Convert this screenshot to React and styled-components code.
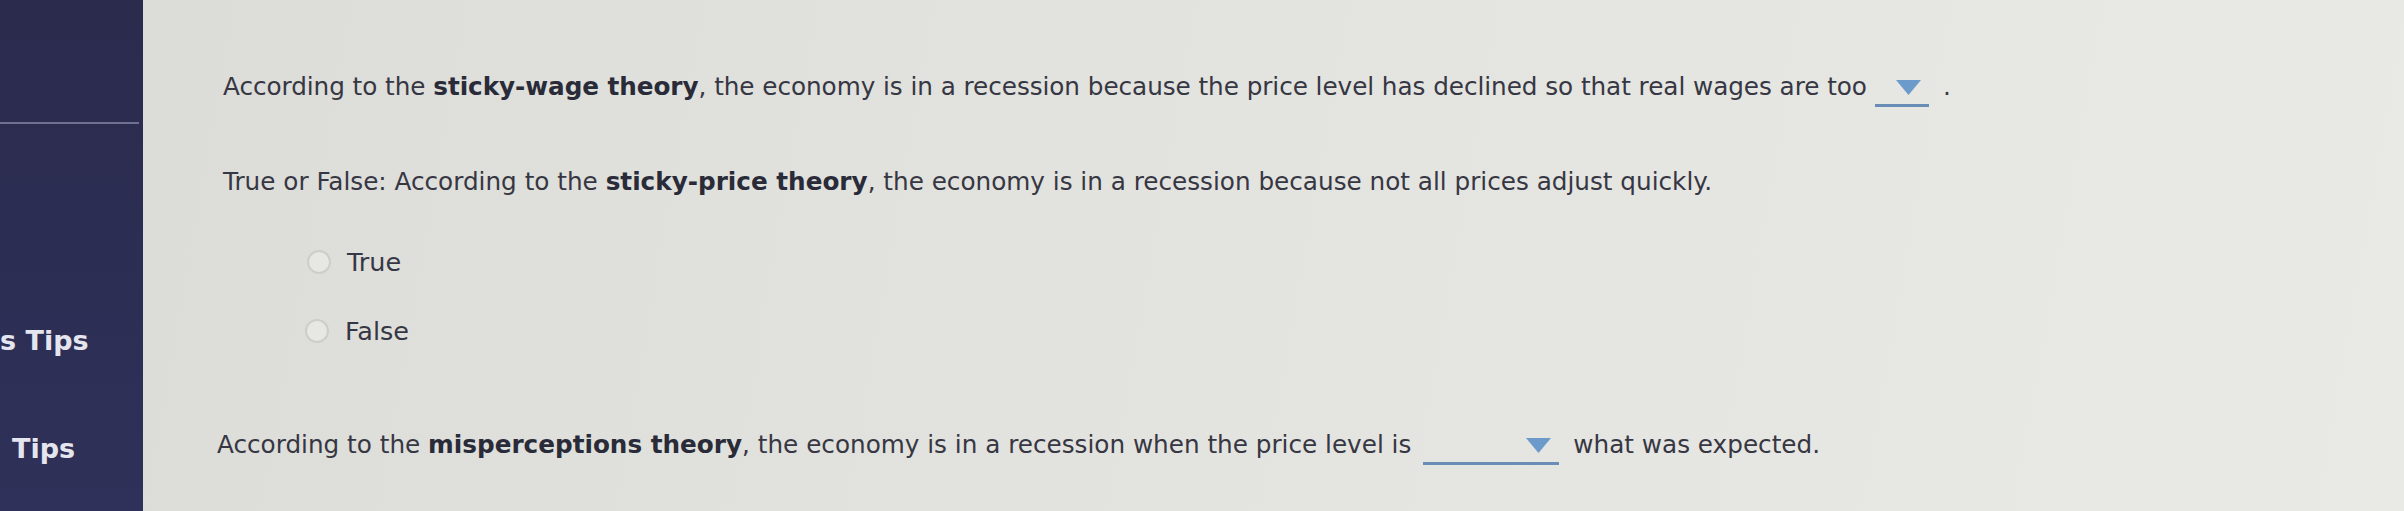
import React from "react";
import styled, { createGlobalStyle } from "styled-components";

const Global = createGlobalStyle`
  html, body { margin: 0; padding: 0; }
  body { width: 2404px; height: 511px; overflow: hidden; background: #e3e3df; }
`;

const Page = styled.div`
  display: flex;
  width: 2404px;
  height: 511px;
  font-family: "DejaVu Sans", Verdana, sans-serif;
`;

const Sidebar = styled.aside`
  width: 143px;
  flex: none;
  background: linear-gradient(180deg, #2a2b4d 0%, #2d2e54 60%, #30315a 100%);
  display: flex;
  flex-direction: column;
  box-shadow: 2px 0 2px rgba(0,0,0,0.25);
`;

const SideTop = styled.div`
  height: 122px;
  margin-right: 4px;
  border-bottom: 2px solid #6e7090;
  flex: none;
`;

const SideItem = styled.div`
  color: #e4e5ee;
  font-family: "DejaVu Sans", sans-serif;
  font-weight: 700;
  font-size: 27px;
  white-space: nowrap;
  padding-left: ${p => p.$indent || 0}px;
  margin-top: ${p => p.$top || 0}px;
  line-height: 34px;
`;

const Content = styled.main`
  flex: 1;
  background: linear-gradient(100deg, #dcdcd8 0%, #e2e2de 40%, #e9e9e6 100%);
  padding-left: 80px;
  padding-top: 71px;
  display: flex;
  flex-direction: column;
  color: #363743;
  font-size: 24.7px;
`;

const Line = styled.div`
  line-height: 32px;
  white-space: nowrap;
  margin-top: ${p => p.$top || 0}px;
  margin-left: ${p => p.$shift || 0}px;
  letter-spacing: ${p => p.$ls || 0}px;
  display: flex;
  align-items: center;
`;

const B = styled.b`
  font-weight: 700;
  color: #2a2b38;
`;

const Drop = styled.span`
  display: inline-flex;
  justify-content: flex-end;
  align-items: center;
  width: ${p => p.$w}px;
  height: 28px;
  margin: 0 ${p => p.$gap || 14}px 0 ${p => p.$gapL || 10}px;
  border-bottom: 3px solid #6a8db8;
  position: relative;
  top: 6px;
  padding-right: 8px;
  box-sizing: border-box;
`;

const Tri = styled.svg`
  width: 25px;
  height: 15px;
  position: relative;
  top: -4px;
`;

const Option = styled.label`
  display: flex;
  align-items: center;
  gap: 16px;
  margin-top: ${p => p.$top}px;
  margin-left: ${p => p.$left}px;
  line-height: 32px;
  font-size: 25.5px;
  color: #363744;
`;

const Radio = styled.span`
  width: 20px;
  height: 20px;
  border-radius: 50%;
  border: 2px solid #cdcdca;
  background: #e7e7e4;
  flex: none;
`;

const Arrow = () => (
  <Tri viewBox="0 0 25 15">
    <path d="M0 0 H25 L12.5 15 Z" fill="#6c9bcb" />
  </Tri>
);

export default function App() {
  return (
    <Page>
      <Global />
      <Sidebar>
        <SideTop />
        <SideItem $top={200}>s Tips</SideItem>
        <SideItem $top={74} $indent={12}>Tips</SideItem>
      </Sidebar>
      <Content>
        <Line $ls={-0.05}>
          According to the&nbsp;<B>sticky-wage theory</B>, the economy is in a recession because the price level has declined so that real wages are too
          <Drop $w={54} $gapL={8}><Arrow /></Drop>.
        </Line>
        <Line $top={63}>
          True or False: According to the&nbsp;<B>sticky-price theory</B>, the economy is in a recession because not all prices adjust quickly.
        </Line>
        <Option $top={48} $left={84}><Radio />True</Option>
        <Option $top={37} $left={82}><Radio />False</Option>
        <Line $top={82} $shift={-6}>
          According to the&nbsp;<B>misperceptions theory</B>, the economy is in a recession when the price level is
          <Drop $w={136} $gapL={12} $gap={14}><Arrow /></Drop>what was expected.
        </Line>
      </Content>
    </Page>
  );
}
